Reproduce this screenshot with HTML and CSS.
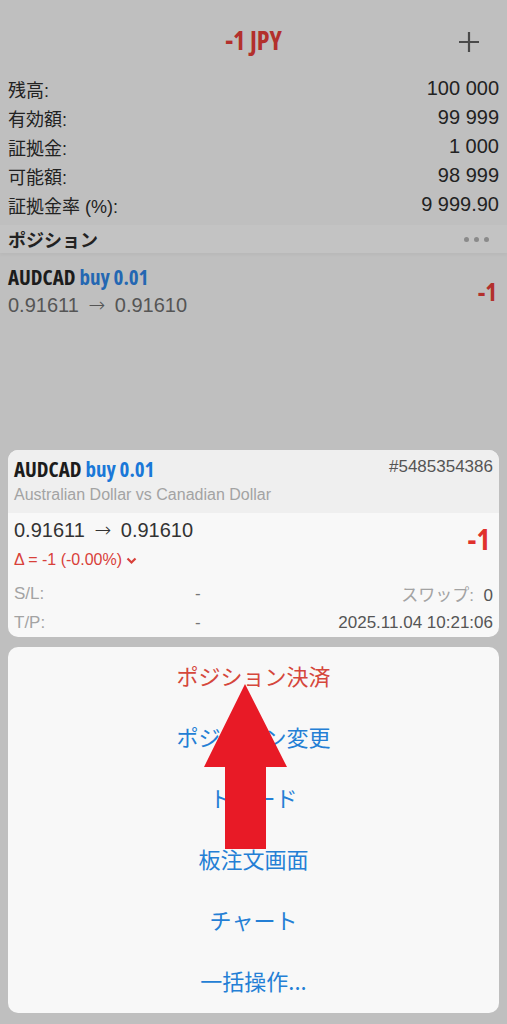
FILE: index.html
```html
<!DOCTYPE html>
<html lang="ja">
<head>
<meta charset="utf-8">
<link rel="stylesheet" href="styles.css">
</head>
<body>
<div class="screen">
  <header class="topbar">
    <div class="title">-1 JPY</div>
    <div class="plus">
      <svg width="22" height="22" viewBox="0 0 22 22"><path d="M11 1v20M1 11h20" stroke="#4a4a4a" stroke-width="2.2" fill="none"/></svg>
    </div>
  </header>

  <section class="account">
    <div class="row"><span class="lbl">残高:</span><span class="val">100 000</span></div>
    <div class="row"><span class="lbl">有効額:</span><span class="val">99 999</span></div>
    <div class="row"><span class="lbl">証拠金:</span><span class="val">1 000</span></div>
    <div class="row"><span class="lbl">可能額:</span><span class="val">98 999</span></div>
    <div class="row"><span class="lbl">証拠金率 (%):</span><span class="val">9 999.90</span></div>
  </section>

  <div class="sec-head">
    <span class="sec-title">ポジション</span>
    <span class="dots"><i></i><i></i><i></i></span>
  </div>

  <div class="pos">
    <div class="pos-left">
      <div class="sym"><b>AUDCAD</b> <span class="buy">buy 0.01</span></div>
      <div class="price">0.91611<span class="arr">→</span>0.91610</div>
    </div>
    <div class="pos-pl">-1</div>
  </div>

  <div class="sheet">
    <div class="card">
      <div class="card-head">
        <div class="card-head-top">
          <div class="sym sym-card"><b>AUDCAD</b> <span class="buy buy-card">buy 0.01</span></div>
          <div class="ticket">#5485354386</div>
        </div>
        <div class="desc">Australian Dollar vs Canadian Dollar</div>
      </div>
      <div class="card-body">
        <div class="pl-row">
          <div class="pl-left">
            <div class="price price-card">0.91611<span class="arr">→</span>0.91610</div>
            <div class="delta">Δ = -1 (-0.00%)
              <svg class="chev" width="11" height="8" viewBox="0 0 11 8"><path d="M1.5 1.5l4 4 4-4" stroke="#d8403a" stroke-width="2.2" fill="none"/></svg>
            </div>
          </div>
          <div class="pl-big">-1</div>
        </div>
        <div class="info-row first">
          <span class="info-lbl">S/L:</span>
          <span class="info-dash">-</span>
          <span class="info-right"><span class="info-lbl2">スワップ:</span>&nbsp;&nbsp;<span class="info-val">0</span></span>
        </div>
        <div class="info-row">
          <span class="info-lbl">T/P:</span>
          <span class="info-dash">-</span>
          <span class="info-right"><span class="info-val">2025.11.04 10:21:06</span></span>
        </div>
      </div>
    </div>

    <nav class="menu">
      <div class="item item-danger">ポジション決済</div>
      <div class="item">ポジション変更</div>
      <div class="item">トレード</div>
      <div class="item">板注文画面</div>
      <div class="item">チャート</div>
      <div class="item">一括操作...</div>
    </nav>

    <svg class="arrow" width="84" height="166" viewBox="0 0 84 166">
      <polygon points="41,0 83,83 62,83 62,165 21,165 21,83 0,83" fill="#e81a26"/>
    </svg>
  </div>
</div>
</body>
</html>
```

FILE: styles.css
```css
* { box-sizing: border-box; }
html, body { margin: 0; padding: 0; }
body {
  background: #bfbfbf;
  font-family: "Liberation Sans", "Noto Sans CJK JP", sans-serif;
  color: #222;
}
.screen {
  width: 507px;
  height: 1024px;
  position: relative;
  overflow: hidden;
}
.topbar {
  height: 74px;
  padding-top: 6px;
  display: flex;
  align-items: center;
  justify-content: center;
  position: relative;
}
.title {
  font-family: "Open Sans", sans-serif;
  font-stretch: 80%;
  font-weight: 700;
  font-size: 26px;
  color: #b3302c;
}
.plus {
  position: absolute;
  right: 27px;
  top: 31px;
  width: 22px;
  height: 22px;
}
.plus svg { display: block; }

.account { padding: 0 8px; }
.row {
  height: 29px;
  display: flex;
  justify-content: space-between;
  align-items: center;
}
.lbl { font-size: 18px; color: #222; }
.val { font-size: 20px; color: #222; }

.sec-head {
  margin-top: 6px;
  height: 28px;
  padding: 0 8px;
  display: flex;
  justify-content: space-between;
  align-items: center;
  background: #c3c3c3;
  box-shadow: 0 2px 3px rgba(0,0,0,0.04);
}
.sec-title { font-size: 18px; font-weight: bold; color: #222; }
.dots { display: flex; gap: 5px; margin-right: 10px; }
.dots i { width: 5px; height: 5px; border-radius: 50%; background: #8a8a8a; display: block; }

.pos {
  padding: 10px 8px 0 8px;
  display: flex;
  justify-content: space-between;
  align-items: center;
}
.sym {
  height: 28px;
  line-height: 28px;
  font-family: "Open Sans", sans-serif;
  font-stretch: 78%;
  font-size: 21px;
  color: #1c1c1c;
}
.sym b { font-weight: 700; }
.buy { color: #2467b2; font-weight: 700; }
.price {
  height: 28px;
  line-height: 28px;
  font-size: 20px;
  color: #555;
}
.arr {
  display: inline-block;
  width: 36px;
  text-align: center;
  font-family: "DejaVu Sans", sans-serif;
  font-weight: 300;
  font-size: 20px;
}
.pos-pl {
  font-family: "Open Sans", sans-serif;
  font-stretch: 78%;
  font-weight: 700;
  font-size: 25px;
  color: #b3302c;
  margin-right: 2px;
}

.sheet {
  position: absolute;
  left: 0;
  top: 450px;
  width: 507px;
  padding: 0 8px;
}
.card {
  border-radius: 10px;
  overflow: hidden;
  background: #f8f8f8;
}
.card-head {
  background: #efefef;
  padding: 6px 6px 5px 6px;
  height: 63px;
}
.card-head-top {
  display: flex;
  justify-content: space-between;
  align-items: flex-start;
}
.sym-card { height: 26px; line-height: 26px; }
.buy-card { color: #1a78d8; }
.ticket { font-size: 17px; color: #555; line-height: 20px; padding-top: 1px; }
.desc { height: 26px; line-height: 26px; font-size: 16px; color: #a3a3a3; }

.card-body { padding: 3px 6px 0 6px; height: 124px; }
.pl-row { display: flex; justify-content: space-between; }
.price-card { color: #333; }
.delta {
  height: 32px;
  line-height: 32px;
  font-size: 16px;
  color: #d8403a;
  display: flex;
  align-items: center;
  gap: 4px;
}
.chev { margin-top: 2px; }
.pl-big {
  font-family: "Open Sans", sans-serif;
  font-stretch: 78%;
  font-weight: 700;
  font-size: 29px;
  color: #e0312c;
  padding-top: 3px;
  margin-right: 3px;
}
.info-row {
  height: 29px;
  display: flex;
  align-items: center;
  font-size: 17px;
}
.info-row.first { margin-top: 3px; }
.info-lbl { color: #a3a3a3; width: 36px; }
.info-lbl2 { color: #a3a3a3; }
.info-dash { margin-left: 145px; color: #777; width: 10px; }
.info-right { margin-left: auto; }
.info-val { color: #555; }

.menu {
  margin-top: 10px;
  border-radius: 10px;
  background: #f8f8f8;
  height: 366px;
  display: flex;
  flex-direction: column;
}
.item {
  height: 61px;
  padding-bottom: 6px;
  display: flex;
  align-items: center;
  justify-content: center;
  font-family: "Noto Sans CJK JP", sans-serif;
  font-size: 22px;
  color: #247fd5;
}
.item-danger { color: #d5473c; }

.arrow {
  position: absolute;
  left: 204px;
  top: 234px;
}
```
